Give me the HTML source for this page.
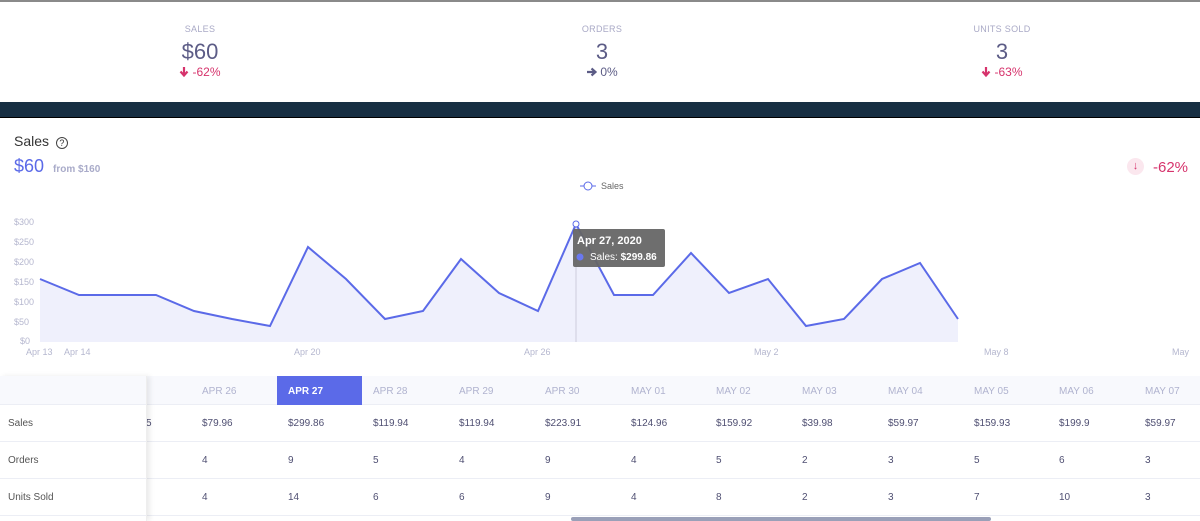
<!DOCTYPE html>
<html><head><style>
*{margin:0;padding:0;box-sizing:border-box}
body{width:1200px;height:521px;overflow:hidden;background:#fff;font-family:"Liberation Sans",sans-serif;position:relative}
.top{position:absolute;top:0;left:0;width:1200px;height:102px;border-top:2px solid #8a8a8a}
.kpi{position:absolute;top:22px;width:200px;text-align:center}
.kpi .l{font-size:9px;color:#a9a9c6;letter-spacing:.3px}
.kpi .v{font-size:22px;color:#5c5c86;margin-top:5px}
.kpi .d{font-size:12px;margin-top:0}
.kpi svg{vertical-align:-1px;margin-right:3px}
.bar{position:absolute;top:102px;left:0;width:1200px;height:16px;background:#172f43;border-bottom:1px solid #000}
.t{position:absolute;font-size:13px}
.tbl{position:absolute;left:0;top:376px;width:1200px}
.hdr{position:absolute;top:0;height:29px;left:0;width:1200px;background:#f8f9fd;border-bottom:1px solid #eceef5}
.row{position:absolute;left:0;width:1200px;height:37px;border-bottom:1px solid #eceef5}
.c{position:absolute;font-size:10px;color:#4f4f72;top:13px}
.hc{position:absolute;font-size:10px;color:#b0b3cf;top:10px}
.left{position:absolute;left:0;top:376px;width:147px;height:145px;box-shadow:3px 0 5px rgba(0,0,0,.08);background:transparent;border-right:1px solid #eee}
</style></head><body>
<div class="top">
<div class="kpi" style="left:100px"><div class="l">SALES</div><div class="v">$60</div><div class="d" style="color:#d6336c"><svg width="10" height="11" viewBox="0 0 10 11"><path d="M5 1V9M1.5 5.5L5 9.5 8.5 5.5" stroke="#d6336c" stroke-width="2.2" fill="none"/></svg>-62%</div></div>
<div class="kpi" style="left:502px"><div class="l">ORDERS</div><div class="v">3</div><div class="d" style="color:#5c5c86"><svg width="11" height="10" viewBox="0 0 11 10"><path d="M1 5H9M5.5 1.5L9.5 5 5.5 8.5" stroke="#5c5c86" stroke-width="2.2" fill="none"/></svg>0%</div></div>
<div class="kpi" style="left:902px"><div class="l">UNITS SOLD</div><div class="v">3</div><div class="d" style="color:#d6336c"><svg width="10" height="11" viewBox="0 0 10 11"><path d="M5 1V9M1.5 5.5L5 9.5 8.5 5.5" stroke="#d6336c" stroke-width="2.2" fill="none"/></svg>-63%</div></div>
</div>
<div class="bar"></div>
<div class="t" style="left:14px;top:133px;color:#333;font-size:14px">Sales <span style="display:inline-block;width:12px;height:12px;border:1px solid #444;border-radius:50%;font-size:9px;text-align:center;line-height:10px;vertical-align:0;margin-left:3px">?</span></div>
<div class="t" style="left:14px;top:156px;color:#5b6ae8;font-size:18px">$60 <span style="font-size:10px;color:#a9abc9;margin-left:4px;font-weight:bold">from $160</span></div>
<div class="t" style="left:1127px;top:158px;width:17px;height:17px;border-radius:50%;background:#fbe7ee;color:#d6336c;font-size:11px;text-align:center;line-height:17px">↓</div>
<div class="t" style="left:1153px;top:159px;color:#d6336c;font-size:15px">-62%</div>
<svg width="1200" height="360" style="position:absolute;left:0;top:0" font-family="Liberation Sans" font-size="9" fill="#b5b7cf">
<line x1="580" y1="186" x2="596" y2="186" stroke="#5b6ae8"/><circle cx="588" cy="186" r="4" fill="#fff" stroke="#5b6ae8"/>
<text x="601" y="189" fill="#666">Sales</text>
<text x="14" y="225">$300</text><text x="14" y="245">$250</text><text x="14" y="265">$200</text><text x="14" y="285">$150</text><text x="14" y="305">$100</text><text x="14" y="325">$50</text><text x="20" y="344">$0</text>
<polygon points="40,342 40,279 79,295 118,295 156,295 194,311 232,319 270,326 308,247 346,279 385,319 423,311 461,259 499,293 538,311 576,224 614,295 653,295 691,253 729,293 768,279 806,326 844,319 882,279 920,263 958,319 958,342" fill="#eff0fc"/>
<line x1="576" y1="224" x2="576" y2="342" stroke="#ccd"/>
<polyline points="40,279 79,295 118,295 156,295 194,311 232,319 270,326 308,247 346,279 385,319 423,311 461,259 499,293 538,311 576,224 614,295 653,295 691,253 729,293 768,279 806,326 844,319 882,279 920,263 958,319" fill="none" stroke="#5b6ae8" stroke-width="2"/>
<circle cx="576" cy="224" r="3" fill="#fff" stroke="#5b6ae8"/>
<text x="26" y="355">Apr 13</text><text x="64" y="355">Apr 14</text><text x="294" y="355">Apr 20</text><text x="524" y="355">Apr 26</text><text x="754" y="355">May 2</text><text x="984" y="355">May 8</text><text x="1172" y="355">May</text>
<rect x="573" y="229" width="92" height="38" rx="2" fill="#666" opacity=".95"/>
<text x="577" y="244" fill="#fff" font-weight="bold" font-size="11">Apr 27, 2020</text>
<circle cx="580" cy="257" r="3.5" fill="#6a78f0"/>
<text x="590" y="260" fill="#fff" font-size="10">Sales: <tspan font-weight="bold">$299.86</tspan></text>
</svg>
<div class="tbl">
<div class="hdr"></div>
<div style="position:absolute;left:277px;top:0;width:85px;height:29px;background:#5b6ae8"></div>
<div class="row" style="top:29px"></div><div class="row" style="top:66px"></div><div class="row" style="top:103px"></div>
<div class="hc" style="left:202px">APR 26</div><div class="hc" style="left:288px;color:#fff;font-weight:bold">APR 27</div><div class="hc" style="left:373px">APR 28</div><div class="hc" style="left:459px">APR 29</div><div class="hc" style="left:545px">APR 30</div><div class="hc" style="left:631px">MAY 01</div><div class="hc" style="left:716px">MAY 02</div><div class="hc" style="left:802px">MAY 03</div><div class="hc" style="left:888px">MAY 04</div><div class="hc" style="left:974px">MAY 05</div><div class="hc" style="left:1059px">MAY 06</div><div class="hc" style="left:1145px">MAY 07</div>
<div style="position:absolute;top:29px;left:0;width:1200px;height:37px">
<div class="c" style="left:146px">5</div><div class="c" style="left:202px">$79.96</div><div class="c" style="left:288px">$299.86</div><div class="c" style="left:373px">$119.94</div><div class="c" style="left:459px">$119.94</div><div class="c" style="left:545px">$223.91</div><div class="c" style="left:631px">$124.96</div><div class="c" style="left:716px">$159.92</div><div class="c" style="left:802px">$39.98</div><div class="c" style="left:888px">$59.97</div><div class="c" style="left:974px">$159.93</div><div class="c" style="left:1059px">$199.9</div><div class="c" style="left:1145px">$59.97</div></div>
<div style="position:absolute;top:66px;left:0;width:1200px;height:37px">
<div class="c" style="left:202px">4</div><div class="c" style="left:288px">9</div><div class="c" style="left:373px">5</div><div class="c" style="left:459px">4</div><div class="c" style="left:545px">9</div><div class="c" style="left:631px">4</div><div class="c" style="left:716px">5</div><div class="c" style="left:802px">2</div><div class="c" style="left:888px">3</div><div class="c" style="left:974px">5</div><div class="c" style="left:1059px">6</div><div class="c" style="left:1145px">3</div></div>
<div style="position:absolute;top:103px;left:0;width:1200px;height:37px">
<div class="c" style="left:202px">4</div><div class="c" style="left:288px">14</div><div class="c" style="left:373px">6</div><div class="c" style="left:459px">6</div><div class="c" style="left:545px">9</div><div class="c" style="left:631px">4</div><div class="c" style="left:716px">8</div><div class="c" style="left:802px">2</div><div class="c" style="left:888px">3</div><div class="c" style="left:974px">7</div><div class="c" style="left:1059px">10</div><div class="c" style="left:1145px">3</div></div>
</div>
<div class="left"><div style="height:29px;background:#f8f9fd;border-bottom:1px solid #eceef5"></div>
<div style="height:37px;border-bottom:1px solid #eceef5;background:#fff;font-size:10px;color:#555;padding:13px 0 0 8px">Sales</div>
<div style="height:37px;border-bottom:1px solid #eceef5;background:#fff;font-size:10px;color:#555;padding:13px 0 0 8px">Orders</div>
<div style="height:37px;border-bottom:1px solid #eceef5;background:#fff;font-size:10px;color:#555;padding:13px 0 0 8px">Units Sold</div></div>
<div style="position:absolute;left:571px;top:517px;width:420px;height:4px;background:#9aa0b8;border-radius:2px"></div>
</body></html>
